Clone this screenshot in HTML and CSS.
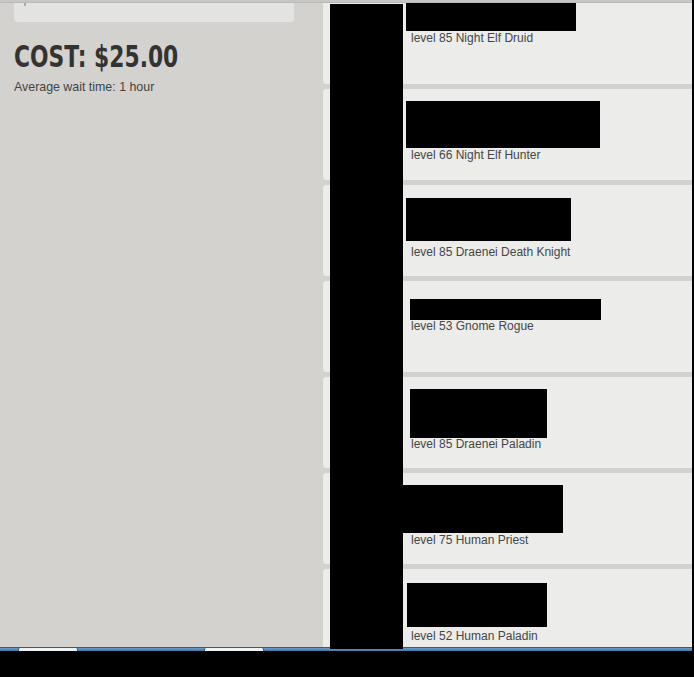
FILE: index.html
```html
<!DOCTYPE html>
<html lang="en">
<head>
<meta charset="utf-8">
<title>Order summary</title>
<link rel="stylesheet" href="styles.css">
</head>
<body>
<div class="screen">
  <div class="topbar"></div>
  <div class="main">
    <aside class="side">
      <div class="tabbox"><span class="tick"></span></div>
      <h1 class="cost"><span class="cost-text">COST: $25.00</span></h1>
      <p class="wait">Average wait time: 1 hour</p>
    </aside>
    <section class="list">
      <div class="cards">
        <div class="card first">
          <div class="redact" style="width:170px;height:38px;margin:0 0 0 83px"></div>
          <div class="level">level 85 Night Elf Druid</div>
        </div>
        <div class="card">
          <div class="redact" style="width:194px;height:47px;margin:12px 0 0 83px"></div>
          <div class="level">level 66 Night Elf Hunter</div>
        </div>
        <div class="card">
          <div class="redact" style="width:165px;height:43px;margin:13px 0 0 83px"></div>
          <div class="level gap">level 85 Draenei Death Knight</div>
        </div>
        <div class="card">
          <div class="redact" style="width:191px;height:21px;margin:18px 0 0 87px"></div>
          <div class="level tight">level 53 Gnome Rogue</div>
        </div>
        <div class="card">
          <div class="redact" style="width:137px;height:49px;margin:12px 0 0 87px"></div>
          <div class="level tight">level 85 Draenei Paladin</div>
        </div>
        <div class="card">
          <div class="redact" style="width:160px;height:48px;margin:12px 0 0 80px"></div>
          <div class="level">level 75 Human Priest</div>
        </div>
        <div class="card">
          <div class="redact" style="width:140px;height:44px;margin:14px 0 0 84px"></div>
          <div class="level small-gap">level 52 Human Paladin</div>
        </div>
      </div>
    </section>
    <div class="edge"></div>
  </div>
  <div class="taskbar">
    <span class="task task-a"></span>
    <span class="task task-b"></span>
  </div>
  <div class="bottom"></div>
  <div class="redact-col"></div>
</div>
</body>
</html>
```

FILE: styles.css
```css
* {
  box-sizing: border-box;
}

html, body {
  margin: 0;
  padding: 0;
  background: #000;
}

.screen {
  position: relative;
  width: 694px;
  height: 677px;
  overflow: hidden;
  background: #000;
  font-family: "Liberation Sans", Arial, sans-serif;
}

.topbar {
  width: 692px;
  height: 3px;
  background: #c6c6c4;
  border-bottom: 1px solid #b9b9b7;
}

.main {
  display: flex;
  height: 644px;
  background: #d3d2ce;
}

.side {
  width: 323px;
  flex: none;
  padding: 0 0 0 14px;
}

.tabbox {
  position: relative;
  width: 280px;
  height: 19px;
  background: #e3e3e1;
  border-radius: 0 0 4px 4px;
}

.tick {
  position: absolute;
  left: 10px;
  top: 0;
  width: 2px;
  height: 3px;
  background: #a9a9a7;
}

.cost {
  margin: 18px 0 0;
  font-family: "DejaVu Sans Condensed", "DejaVu Sans", sans-serif;
  font-weight: bold;
  font-size: 30px;
  line-height: 34px;
  color: #333;
}

.cost-text {
  display: inline-block;
  transform: scaleX(0.808);
  transform-origin: left center;
}

.wait {
  margin: 6px 0 0;
  font-size: 12.4px;
  line-height: 15px;
  color: #444;
}

.list {
  width: 369px;
  flex: none;
  overflow: hidden;
}

.cards {
  margin-top: -10px;
  display: flex;
  flex-direction: column;
  gap: 5px;
}

.card {
  height: 91px;
  background: #ececea;
  border-radius: 4px 0 0 4px;
}

.redact {
  background: #000;
}

.level {
  padding-left: 88px;
  font-size: 12px;
  line-height: 14px;
  color: #464646;
}

.level.gap {
  margin-top: 4px;
}

.level.tight {
  margin-top: -1px;
}

.level.small-gap {
  margin-top: 2px;
}

.edge {
  width: 2px;
  flex: none;
  background: #000;
}

.taskbar {
  position: relative;
  width: 692px;
  height: 4px;
  background: linear-gradient(#6d9dc5, #3f78a6);
  border-top: 1px solid #2f5f86;
}

.task {
  position: absolute;
  top: 0;
  height: 3px;
  background: #eef3f8;
  border-left: 1px solid #30506a;
  border-right: 1px solid #30506a;
  border-radius: 2px 2px 0 0;
}

.task-a {
  left: 18px;
  width: 60px;
}

.task-b {
  left: 204px;
  width: 60px;
}

.bottom {
  height: 26px;
  background: #000;
}

.redact-col {
  position: absolute;
  left: 330px;
  top: 4px;
  width: 73px;
  height: 645px;
  background: #000;
}
```
